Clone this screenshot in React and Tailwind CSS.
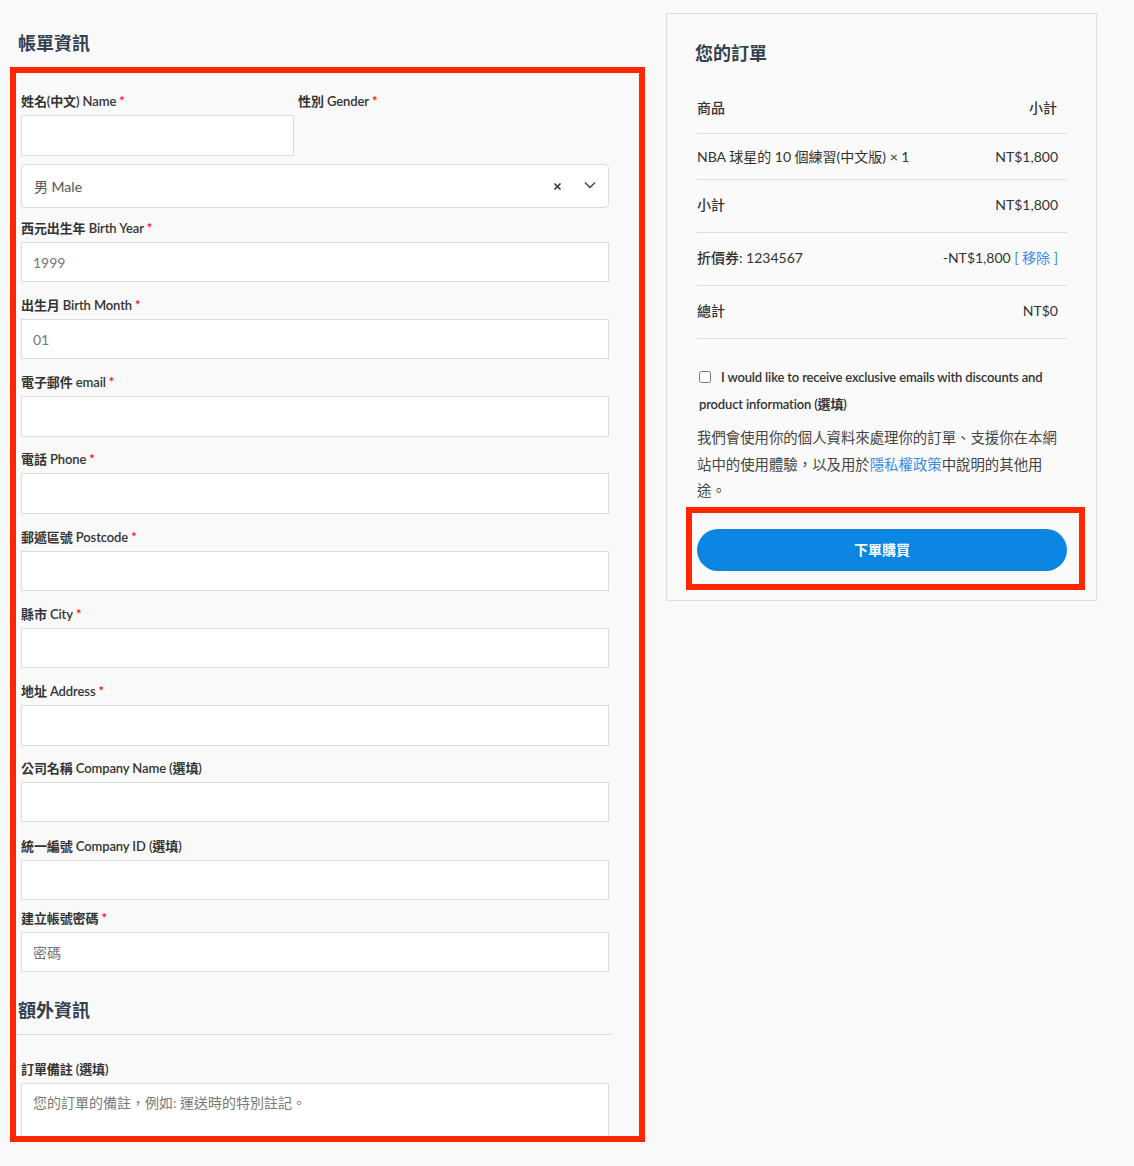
import React from "react";

const fields = [
  { label: "西元出生年 Birth Year", req: true, ph: "1999", mt: "mt-[10px]", h: "h-[40px]" },
  { label: "出生月 Birth Month", req: true, ph: "01", mt: "mt-[13px]", h: "h-[40px]" },
  { label: "電子郵件 email", req: true, ph: "", mt: "mt-[13px]", h: "h-[41px]" },
  { label: "電話 Phone", req: true, ph: "", mt: "mt-[12px]", h: "h-[41px]" },
  { label: "郵遞區號 Postcode", req: true, ph: "", mt: "mt-[13px]", h: "h-[40px]" },
  { label: "縣市 City", req: true, ph: "", mt: "mt-[13px]", h: "h-[40px]" },
  { label: "地址 Address", req: true, ph: "", mt: "mt-[13px]", h: "h-[41px]" },
  { label: "公司名稱 Company Name (選填)", req: false, ph: "", mt: "mt-[12px]", h: "h-[40px]" },
  { label: "統一編號 Company ID (選填)", req: false, ph: "", mt: "mt-[14px]", h: "h-[40px]" },
  { label: "建立帳號密碼", req: true, ph: "密碼", mt: "mt-[8px]", h: "h-[40px]" },
];

function Label({ children, req }) {
  return (
    <div className="h-[20px] leading-[20px] text-[13px] font-semibold tracking-[-0.1px] text-[#333] whitespace-nowrap">
      {children}
      {req && <span className="text-[#ff0000] ml-[3px]">*</span>}
    </div>
  );
}

function Input({ ph, h }) {
  return (
    <div
      className={`mt-[4px] ${h} bg-white border border-[#dcdcdc] flex items-center pl-[11px] text-[14px] text-[#777]`}
    >
      {ph}
    </div>
  );
}

export default function App() {
  return (
    <div className="h-[1166px] overflow-hidden bg-[#f9f9f9] font-['Lato','Noto_Sans_CJK_TC',sans-serif] flex">
      {/* Left column */}
      <div className="ml-[14px] w-[598px] shrink-0">
        <div className="pt-[30px] pl-[4px] h-[56px] text-[18px] leading-[26px] font-bold text-[#34404f]">
          帳單資訊
        </div>
        <div className="relative mt-[11px] pt-[24px]">
          <div className="absolute top-0 left-[-4px] right-[-33px] h-[1075px] border-[6px] border-[#ff2600] pointer-events-none z-10" />
          <div className="pl-[7px] pr-[3px]">
            <div className="flex">
              <div className="w-[273px]">
                <Label req>姓名(中文) Name</Label>
                <Input ph="" h="h-[41px]" />
              </div>
              <div className="ml-[4px]">
                <Label req>性別 Gender</Label>
              </div>
            </div>
            <div className="mt-[8px] h-[44px] bg-white border border-[#dcdcdc] rounded-[4px] flex items-center pl-[12px] pr-[12px] text-[14px] text-[#555]">
              <span className="flex-1">男 Male</span>
              <svg width="9" height="9" viewBox="0 0 9 9" className="mr-[22px]">
                <path d="M1.5 1.5 L7.5 7.5 M7.5 1.5 L1.5 7.5" stroke="#333" strokeWidth="1.6" />
              </svg>
              <svg width="12" height="8" viewBox="0 0 12 8" className="mb-[2px]">
                <path d="M1 1.5 L6 6.5 L11 1.5" stroke="#444" strokeWidth="1.4" fill="none" />
              </svg>
            </div>
            {fields.map((f) => (
              <div key={f.label} className={f.mt}>
                <Label req={f.req}>{f.label}</Label>
                <Input ph={f.ph} h={f.h} />
              </div>
            ))}
          </div>
          <div className="mt-[25px] pl-[4px] pb-[11px] border-b border-[#dcdcdc] text-[18px] leading-[26px] font-bold text-[#34404f]">
            額外資訊
          </div>
          <div className="pl-[7px] pr-[3px] mt-[24px]">
            <Label>訂單備註 (選填)</Label>
            <div className="mt-[4px] h-[57px] bg-white border border-[#dcdcdc] pl-[11px] pt-[9px] text-[14px] leading-[20px] text-[#777]">
              您的訂單的備註，例如: 運送時的特別註記。
            </div>
          </div>
        </div>
      </div>

      {/* Right panel */}
      <div className="ml-[54px] mt-[13px] w-[431px] h-[588px] border border-[#dedede] bg-[#fafafa] pl-[30px] pr-[29px] pt-[26px] shrink-0">
        <div className="text-[18px] leading-[26px] font-bold text-[#34404f] -ml-[2px]">您的訂單</div>
        <div className="mt-[22px] text-[14px] text-[#333]">
          <div className="h-[46px] flex items-center justify-between border-b border-[#dedede] pr-[10px] pb-[6px] font-medium">
            <span>商品</span>
            <span>小計</span>
          </div>
          <div className="h-[46px] flex items-center justify-between border-b border-[#dedede] pr-[9px]">
            <span>NBA 球星的 10 個練習(中文版) × 1</span>
            <span>NT$1,800</span>
          </div>
          <div className="h-[53px] flex items-center justify-between border-b border-[#dedede] pr-[9px] pb-[3px]">
            <span className="font-medium">小計</span>
            <span>NT$1,800</span>
          </div>
          <div className="h-[53px] flex items-center justify-between border-b border-[#dedede] pr-[9px] pb-[3px]">
            <span>
              <span className="font-medium">折價券</span>: 1234567
            </span>
            <span>
              -NT$1,800 <span className="text-[#3d8be8]">[ 移除 ]</span>
            </span>
          </div>
          <div className="h-[53px] flex items-center justify-between border-b border-[#dedede] pr-[9px] pb-[3px]">
            <span className="font-medium">總計</span>
            <span>NT$0</span>
          </div>
        </div>
        <div className="mt-[25px] pl-[2px] text-[13px] leading-[27px] font-semibold tracking-[-0.16px] text-[#333]">
          <input type="checkbox" className="w-[12px] h-[12px] mr-[10px] align-[-1px]" />
          I would like to receive exclusive emails with discounts and product information (選填)
        </div>
        <p className="mt-[7px] w-[366px] text-[14.4px] leading-[26.5px] text-[#444]">
          我們會使用你的個人資料來處理你的訂單、支援你在本網站中的使用體驗，以及用於
          <span className="text-[#3d8be8]">隱私權政策</span>
          中說明的其他用途。
        </p>
        <div className="relative mt-[24px]">
          <div className="absolute left-[-11px] right-[-18px] top-[-22px] bottom-[-19px] border-[6px] border-[#ff2600] pointer-events-none" />
          <div className="h-[42px] rounded-full bg-[#0b86e3] flex items-center justify-center text-white text-[14px] font-bold">
            下單購買
          </div>
        </div>
      </div>
    </div>
  );
}
